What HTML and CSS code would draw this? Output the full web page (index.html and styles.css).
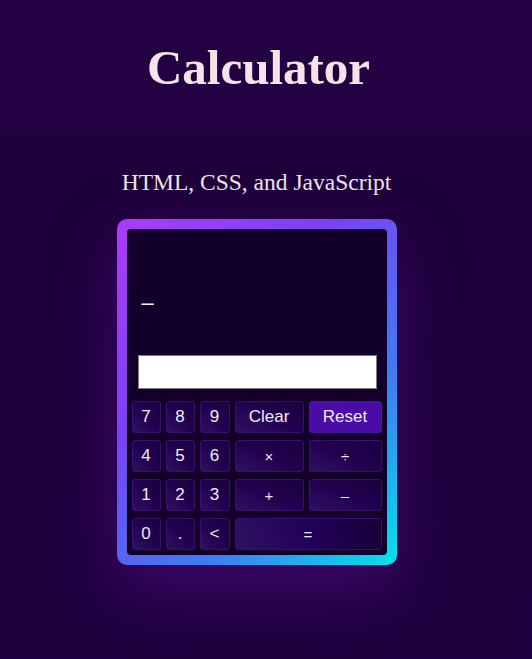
FILE: index.html
```html
<!DOCTYPE html>
<html lang="en">
<head>
<meta charset="utf-8">
<title>Calculator</title>
<link rel="stylesheet" href="styles.css">
</head>
<body>
<header class="site-header">
  <h1 class="title">Calculator</h1>
</header>
<main class="main">
  <p class="subtitle">HTML, CSS, and JavaScript</p>
  <div class="calc">
    <div class="calc-inner">
      <div class="display">–</div>
      <input class="entry" type="text">
      <div class="keys">
        <button class="key">7</button>
        <button class="key">8</button>
        <button class="key">9</button>
        <button class="key">Clear</button>
        <button class="key key-reset">Reset</button>
        <button class="key">4</button>
        <button class="key">5</button>
        <button class="key">6</button>
        <button class="key key-op">×</button>
        <button class="key key-op">÷</button>
        <button class="key">1</button>
        <button class="key">2</button>
        <button class="key">3</button>
        <button class="key key-op">+</button>
        <button class="key key-op">–</button>
        <button class="key">0</button>
        <button class="key">.</button>
        <button class="key">&lt;</button>
        <button class="key key-op key-eq">=</button>
      </div>
    </div>
  </div>
</main>
</body>
</html>
```
FILE: styles.css
```css
html, body {
  margin: 0;
  padding: 0;
}
body {
  min-height: 659px;
  background: linear-gradient(to bottom, #1d0038 0%, #200040 100%);
  font-family: "Liberation Sans", Arial, sans-serif;
  color: #f2e6ec;
}
.site-header {
  background: #220041;
  padding: 44px 15px 43px 0;
  text-align: center;
}
.title {
  margin: 0;
  font-family: "Liberation Serif", "Times New Roman", serif;
  font-weight: bold;
  font-size: 49px;
  line-height: 48px;
  color: #f2e4e8;
}
.main {
  padding-right: 19px;
  display: flex;
  flex-direction: column;
  align-items: center;
}
.subtitle {
  margin: 36px 0 25px;
  font-family: "Liberation Serif", "Times New Roman", serif;
  font-size: 23.5px;
  line-height: 23px;
  color: #f2e4ec;
}
.calc {
  width: 260px;
  padding: 10px;
  border-radius: 10px;
  background: linear-gradient(135deg, #ab3cf8 0%, #7a42f3 35%, #3d7ff0 70%, #00e4ea 100%);
  box-shadow: 0 24px 60px rgba(90, 15, 150, 0.5);
}
.calc-inner {
  background: #12002a;
  border-radius: 4px;
  padding: 5px;
  display: flex;
  flex-direction: column;
}
.display {
  height: 121px;
  box-sizing: border-box;
  padding: 58px 0 0 10px;
  font-size: 22px;
  line-height: 22px;
  color: #f4ecf0;
}
.entry {
  box-sizing: border-box;
  width: 239px;
  height: 34px;
  margin: 0 0 12px 6px;
  border: 1px solid #7d7d7d;
  background: #ffffff;
  padding: 0;
}
.keys {
  display: grid;
  grid-template-columns: 29px 29px 30px 69px 73px;
  grid-auto-rows: 32px;
  column-gap: 5px;
  row-gap: 7px;
}
.key {
  margin: 0;
  padding: 0;
  border: 1px solid #36126e;
  border-radius: 3px;
  background: linear-gradient(to top right, #2f1262 0%, #22004f 50%, #190040 100%);
  color: #f2eaf2;
  font-family: "Liberation Sans", Arial, sans-serif;
  font-size: 17px;
}
.key-op {
  font-size: 15px;
}
.key-reset {
  background: linear-gradient(to top right, #4c0ca6 0%, #4a0aa8 100%);
  border-color: #4e12a8;
}
.key-eq {
  grid-column: span 2;
  background: linear-gradient(70deg, #2f1262 0%, #22005a 50%, #160036 100%);
}
```
